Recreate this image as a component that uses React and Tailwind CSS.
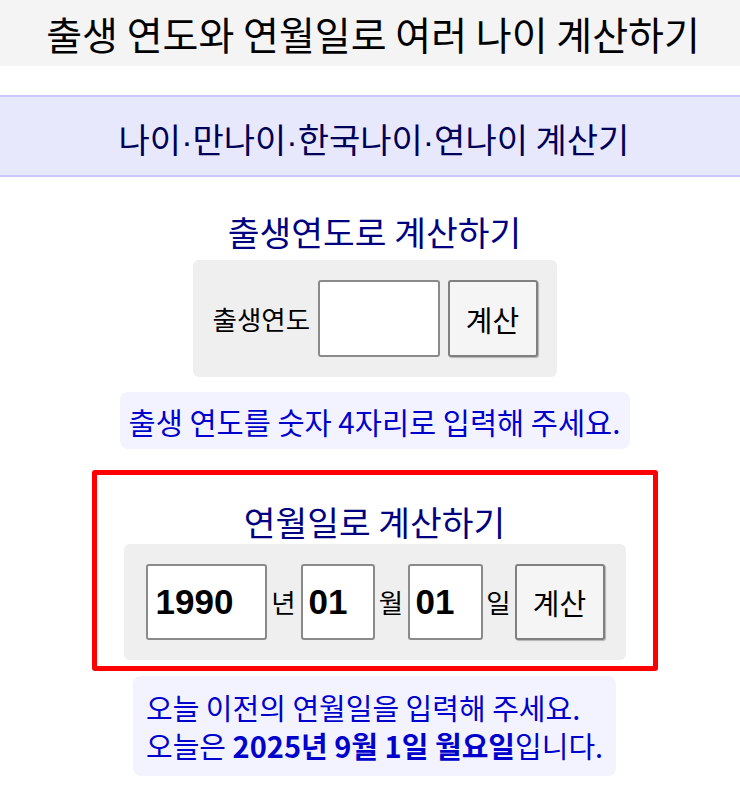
import React from "react";

const KR = { fontFamily: '"Noto Sans CJK KR", "Noto Sans", sans-serif' };
const ARIAL = { fontFamily: '"Liberation Sans", Arial, sans-serif' };

function Dot() {
  return <span style={ARIAL}>·</span>;
}

export default function App() {
  return (
    <div className="w-[740px] min-h-[800px] bg-white text-black" style={KR}>
      {/* Header */}
      <div className="h-[66px] bg-[#f4f4f4] flex items-center justify-center pl-[6px]">
        <h1 className="text-[39px] leading-[44px] font-normal text-black whitespace-nowrap">
          출생 연도와 연월일로 여러 나이 계산하기
        </h1>
      </div>

      {/* Band */}
      <div className="mt-[29px] h-[82px] border-y-2 border-[#c8c8fa] bg-[#e8e8fc] flex items-center justify-center pl-[8px] pt-[8px]">
        <h2 className="text-[34px] leading-[40px] font-normal text-[#000058] whitespace-nowrap">
          나이<Dot />만나이<Dot />한국나이<Dot />연나이 계산기
        </h2>
      </div>

      {/* Section 1 */}
      <div className="flex flex-col items-center pl-[9px]">
        <h3 className="mt-[34px] text-[34.5px] leading-[40px] font-normal text-[#000080] whitespace-nowrap">
          출생연도로 계산하기
        </h3>
        <div className="mt-[9px] w-[364px] h-[117px] rounded-[6px] bg-[#efefef] flex items-center pl-[20px] pr-[19px]">
          <span className="w-[98px] text-[26.5px] leading-[30px] text-black whitespace-nowrap">
            출생연도
          </span>
          <div className="ml-[7px] w-[122px] h-[77px] rounded-[3px] border-2 border-[#8a8a8a] bg-white" />
          <button className="ml-[8px] w-[90px] h-[77px] rounded-[3px] border-2 border-[#808080] bg-[#f5f5f5] shadow-[1px_1px_1px_rgba(0,0,0,0.25)] text-[29px] leading-[32px] text-black">
            계산
          </button>
        </div>
        <div className="mt-[15px] w-[510px] h-[57px] rounded-[8px] bg-[#f3f3ff] flex items-center justify-center">
          <span className="text-[29.5px] leading-[36px] text-[#0000cd] whitespace-nowrap">
            출생 연도를 숫자 4자리로 입력해 주세요.
          </span>
        </div>

        {/* Section 2 (red box) */}
        <div className="mt-[21px] w-[566px] border-[5px] border-[#ff0000] rounded-[3px] flex flex-col items-center pt-[26px] pb-[6px]">
          <h3 className="text-[34.5px] leading-[40px] font-normal text-[#000080] whitespace-nowrap">
            연월일로 계산하기
          </h3>
          <div className="mt-[3px] w-[502px] h-[116px] rounded-[6px] bg-[#efefef] flex items-center pl-[22px]">
            <div
              className="w-[121px] h-[76px] rounded-[3px] border-2 border-[#8a8a8a] bg-white flex items-center pl-[8px] text-[35px] font-bold text-black"
              style={ARIAL}
            >
              1990
            </div>
            <span className="w-[34px] text-center text-[26.5px] leading-[30px] text-black">년</span>
            <div
              className="w-[74px] h-[76px] rounded-[3px] border-2 border-[#8a8a8a] bg-white flex items-center pl-[6px] text-[35px] font-bold text-black"
              style={ARIAL}
            >
              01
            </div>
            <span className="w-[33px] text-center text-[26.5px] leading-[30px] text-black">월</span>
            <div
              className="w-[75px] h-[76px] rounded-[3px] border-2 border-[#8a8a8a] bg-white flex items-center pl-[6px] text-[35px] font-bold text-black"
              style={ARIAL}
            >
              01
            </div>
            <span className="w-[32px] text-center text-[26.5px] leading-[30px] text-black">일</span>
            <button className="w-[90px] h-[76px] rounded-[3px] border-2 border-[#808080] bg-[#f5f5f5] shadow-[1px_1px_1px_rgba(0,0,0,0.25)] text-[29px] leading-[32px] text-black">
              계산
            </button>
          </div>
        </div>

        {/* Bottom hint */}
        <div className="mt-[5px] w-[483px] rounded-[8px] bg-[#f3f3ff] py-[12px] pl-[13px] text-[29px] leading-[38px] text-[#0000cd]">
          <div className="whitespace-nowrap">오늘 이전의 연월일을 입력해 주세요.</div>
          <div className="whitespace-nowrap">
            오늘은 <b className="font-bold">2025년 9월 1일 월요일</b>입니다.
          </div>
        </div>
      </div>
    </div>
  );
}
